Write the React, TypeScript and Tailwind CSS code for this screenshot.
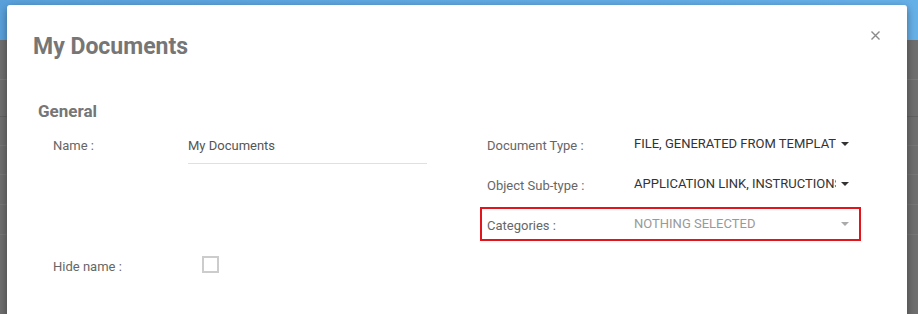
import React from "react";

const font = { fontFamily: "Roboto, 'Noto Sans', Arial, sans-serif" };

function Caret({ light }: { light?: boolean }) {
  return (
    <span
      className={`ml-[5px] h-0 w-0 shrink-0 border-x-[4px] border-t-[4px] border-x-transparent ${
        light ? "border-t-[#aaaaaa]" : "border-t-[#333333]"
      }`}
    />
  );
}

function SelectRow({
  label,
  value,
  placeholder,
  highlight,
}: {
  label: string;
  value: string;
  placeholder?: boolean;
  highlight?: boolean;
}) {
  return (
    <div
      className={`flex h-[34px] items-start border-2 pl-[5px] pr-[10px] pt-[7px] ${
        highlight ? "border-[#e2141c]" : "border-transparent"
      }`}
    >
      <div className="w-[147px] shrink-0 text-[13px] leading-[20px] text-[#666666]">{label}</div>
      <div className="-mt-[2px] flex min-w-0 flex-1 items-center">
        <div
          className={`w-[202px] shrink-0 overflow-hidden whitespace-nowrap text-[13px] uppercase leading-[20px] ${
            placeholder ? "text-[#999999]" : "text-[#333333]"
          }`}
        >
          {value}
        </div>
        <div className="flex h-[20px] flex-1 items-center">
          <Caret light={placeholder} />
        </div>
      </div>
    </div>
  );
}

export default function App() {
  return (
    <div className="relative h-[314px] w-[918px] overflow-hidden bg-[#6f6f6f]" style={font}>
      {/* underlying page */}
      <div className="flex flex-col">
        <div className="h-[40px] bg-gradient-to-r from-[#5aa1db] to-[#66b0e8]" />
        <div className="h-[40px] border-b border-[#7a7a7a]" />
        <div className="h-[37px] border-b border-[#626262]" />
        <div className="h-[29px] border-b border-[#777777]" />
        <div className="h-[29px] border-b border-[#777777]" />
        <div className="h-[30px] border-b border-[#777777]" />
        <div className="h-[30px] border-b border-[#777777]" />
      </div>

      {/* modal */}
      <div className="absolute left-[7px] top-[5px] h-[340px] w-[900px] rounded-[3px] bg-white px-[26px] pt-[29px] shadow-[0_3px_9px_rgba(0,0,0,0.4)]">
        <button className="absolute right-[27px] top-[26px] flex h-[9px] w-[9px] items-center justify-center">
          <svg width="9" height="9" viewBox="0 0 9 9">
            <path d="M0.5 0.5 L8.5 8.5 M8.5 0.5 L0.5 8.5" stroke="#8a8a8a" strokeWidth="1.4" />
          </svg>
        </button>

        <h1 className="text-[23px] font-bold leading-[26px] text-[#767676]">My Documents</h1>

        <h2 className="ml-[5px] mt-[41px] text-[17px] font-bold leading-[20px] text-[#767676]">General</h2>

        <div className="mt-[6px] flex">
          {/* left column */}
          <div className="flex w-[447px] shrink-0 flex-col pl-[20px] pt-[9px]">
            <div className="flex items-start">
              <div className="w-[135px] shrink-0 text-[13px] leading-[20px] text-[#666666]">Name :</div>
              <div className="w-[239px] border-b border-[#e0e0e0] pb-[7px] text-[13px] leading-[20px] text-[#555555]">
                My Documents
              </div>
            </div>
            <div className="mt-[92px] flex items-start">
              <div className="w-[149px] shrink-0 pt-[1px] text-[13px] leading-[20px] text-[#666666]">
                Hide name :
              </div>
              <div className="h-[17px] w-[17px] border-2 border-[#cccccc] bg-white" />
            </div>
          </div>

          {/* right column */}
          <div className="flex w-[381px] shrink-0 flex-col gap-[6px]">
            <SelectRow label="Document Type :" value="File, Generated from template" />
            <SelectRow label="Object Sub-type :" value="Application link, Instructions" />
            <SelectRow label="Categories :" value="Nothing selected" placeholder highlight />
          </div>
        </div>
      </div>
    </div>
  );
}
